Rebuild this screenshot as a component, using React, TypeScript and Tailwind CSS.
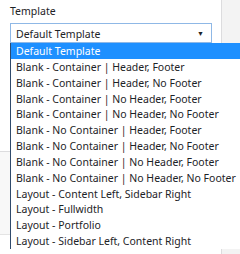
const options = [
  "Default Template",
  "Blank - Container | Header, Footer",
  "Blank - Container | Header, No Footer",
  "Blank - Container | No Header, Footer",
  "Blank - Container | No Header, No Footer",
  "Blank - No Container | Header, Footer",
  "Blank - No Container | Header, No Footer",
  "Blank - No Container | No Header, Footer",
  "Blank - No Container | No Header, No Footer",
  "Layout - Content Left, Sidebar Right",
  "Layout - Fullwidth",
  "Layout - Portfolio",
  "Layout - Sidebar Left, Content Right",
];

export default function App() {
  return (
    <div className="relative flex h-[254px] w-[240px] overflow-hidden bg-white font-['Noto_Sans',sans-serif] text-[10.5px] text-[#1d2327]">
      <div className="flex w-[221px] flex-col">
        <div className="h-[23px] px-[10px] pt-[4px] leading-[15px]">Template</div>
        <div className="ml-[10px] flex h-[20px] w-[202px] items-center justify-between border border-[#8fb8e6] pt-[3px] pl-[5px] pr-[7px]">
          <span>Default Template</span>
          <span className="pb-[3px] text-[7px] leading-none">▼</span>
        </div>
        <div className="mt-[108px] h-[83px] border-t border-[#dcdcde] bg-[#f8f8f8]" />
        <div className="h-px bg-[#e4e4e4]" />
      </div>
      <div className="flex-1 border-l border-[#dcdcde] bg-[#f3f3f3]" />

      <ul className="absolute left-[10px] top-[43px] w-[240px] border-l border-[#2f4a6b] bg-white">
        {options.map((opt, i) => (
          <li
            key={opt}
            className={
              i === 0
                ? "h-[15.85px] whitespace-nowrap bg-[#1e90ff] pt-[2px] pl-[5px] leading-[13.85px] text-white"
                : "h-[15.85px] whitespace-nowrap pt-[2px] pl-[5px] leading-[13.85px] text-[#1d2327]"
            }
          >
            {opt}
          </li>
        ))}
      </ul>
    </div>
  );
}
